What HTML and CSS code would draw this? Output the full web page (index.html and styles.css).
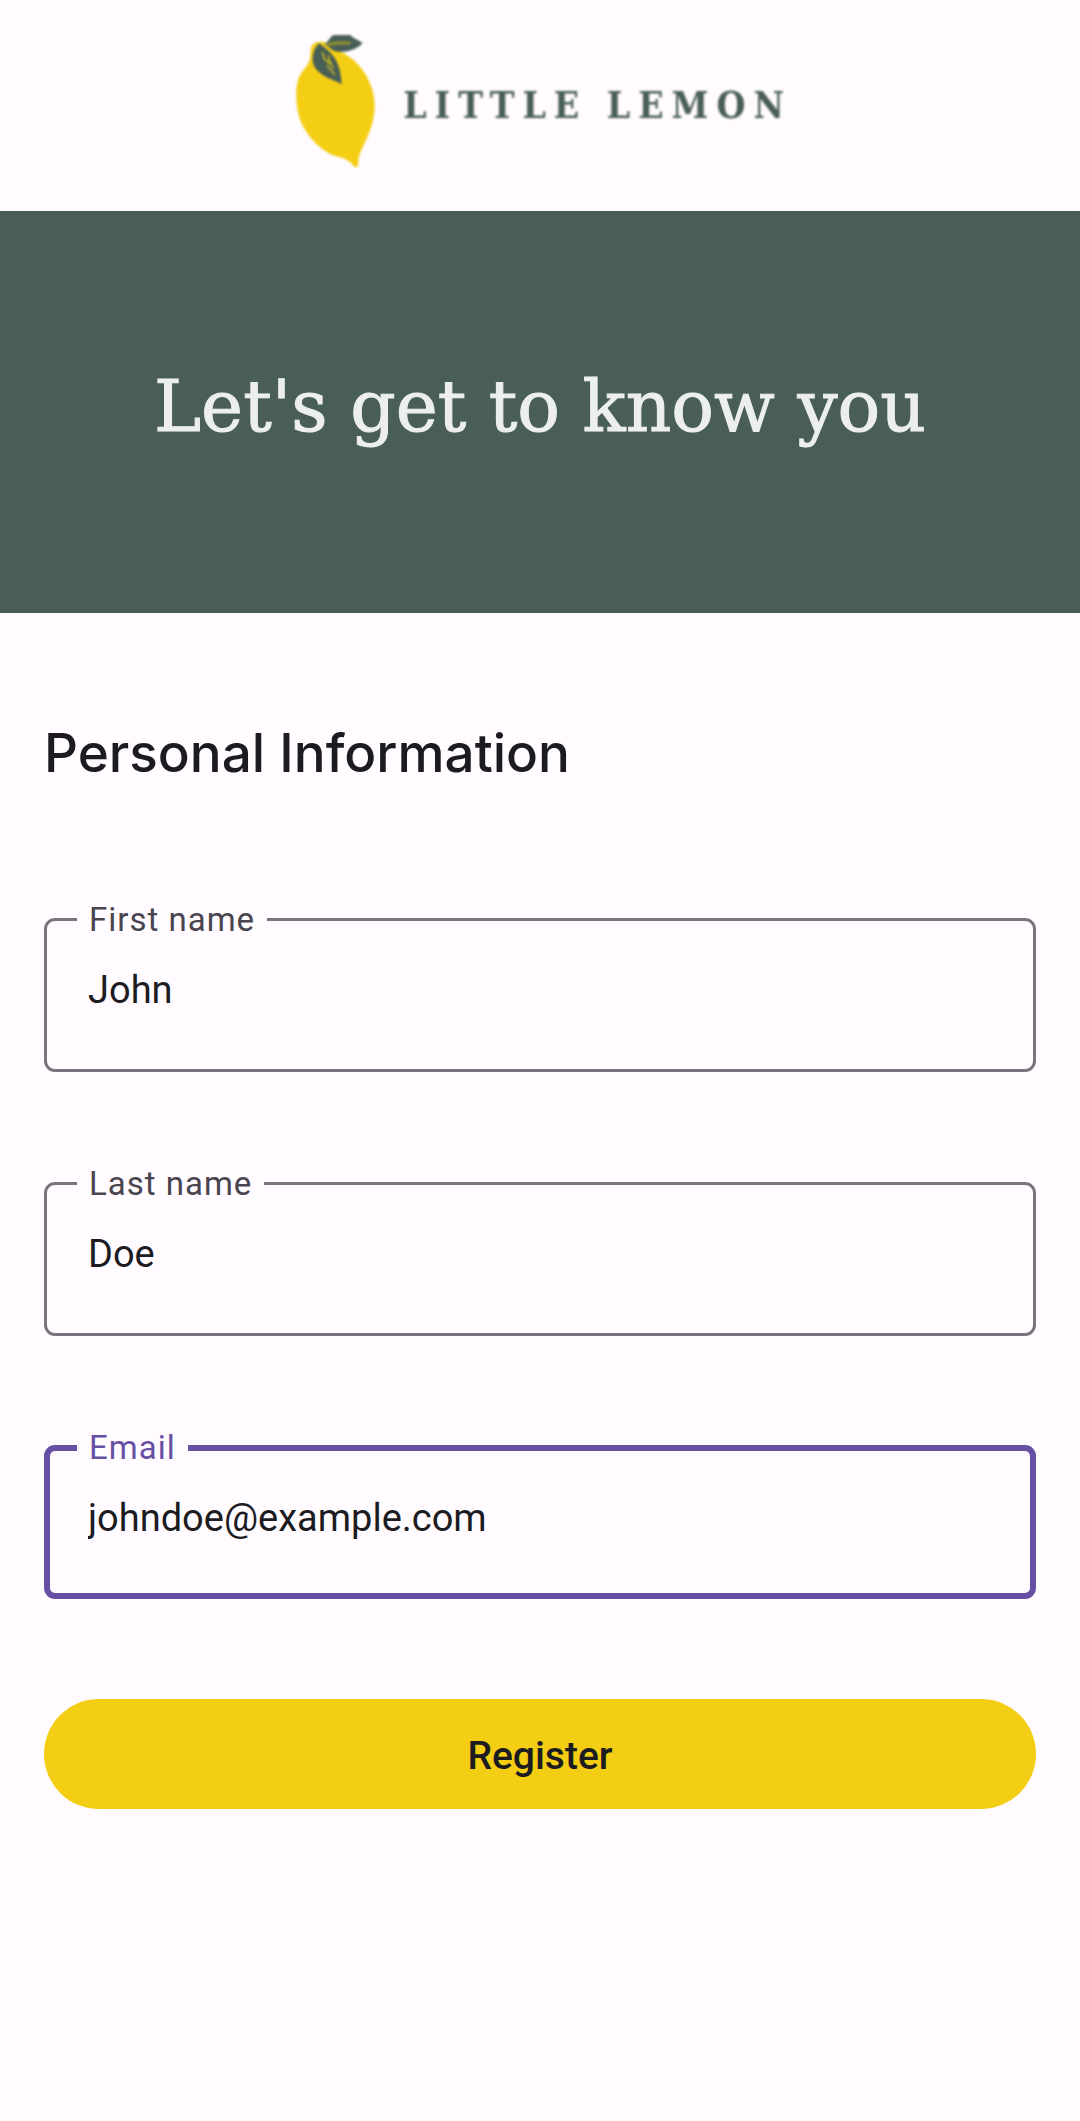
FILE: index.html
```html
<!DOCTYPE html>
<html lang="en">
<head>
<meta charset="utf-8">
<meta name="viewport" content="width=device-width, initial-scale=1">
<title>Little Lemon</title>
<link rel="stylesheet" href="styles.css">
</head>
<body>
<header class="brand">
  <svg class="brand-mark" viewBox="54 45 237 396" aria-hidden="true">
    <path fill="#f4ce14" d="M98 90C98 70 118 60 146 68L186 95C245 118 292 190 290 262C288 325 258 370 244 405C240 418 243 430 238 441L229 441C220 425 202 415 180 410C140 402 90 355 70 308C53 270 50 205 62 175C70 152 92 140 96 115Z"/>
    <path fill="#495e57" d="M140 72C156 62 156 45 170 45L216 45C224 54 242 60 254 69C240 86 210 98 178 95C160 92 152 80 140 72Z"/>
    <path fill="none" stroke="#8a8f35" stroke-width="10" stroke-linecap="round" d="M152 74C172 66 198 70 214 69"/>
    <path fill="#495e57" d="M123 70C150 90 188 112 191 193C170 180 135 174 112 145C97 122 104 88 123 70Z"/>
    <path fill="none" stroke="#c2b51e" stroke-width="5" stroke-linecap="round" d="M134 98L139 117L154 130L152 108M148 137L169 163M156 124L166 144"/>
  </svg>
  <span class="brand-name">LITTLE LEMON</span>
</header>

<section class="hero">
  <h1 class="hero-title">Let's get to know you</h1>
</section>

<main class="content">
  <h2 class="section-title">Personal Information</h2>
  <form class="form">
    <fieldset class="field">
      <legend class="field-legend"><label for="first-name">First name</label></legend>
      <input class="field-input" id="first-name" type="text" value="John">
    </fieldset>
    <fieldset class="field">
      <legend class="field-legend"><label for="last-name">Last name</label></legend>
      <input class="field-input" id="last-name" type="text" value="Doe">
    </fieldset>
    <fieldset class="field field-active">
      <legend class="field-legend"><label for="email">Email</label></legend>
      <input class="field-input" id="email" type="email" value="johndoe@example.com">
    </fieldset>
    <button class="submit" type="submit">Register</button>
  </form>
</main>
</body>
</html>
```
FILE: styles.css
```css
* {
  box-sizing: border-box;
}

body {
  margin: 0;
  background: #fffbff;
  color: #1c1b1f;
  font-family: Roboto, "Liberation Sans", sans-serif;
}

.brand {
  display: flex;
  justify-content: center;
  align-items: center;
  gap: 28px;
  padding: 35px 0 44px;
}

.brand-mark {
  width: 79px;
  height: 132px;
  filter: blur(1px);
}

.brand-name {
  padding-top: 8px;
  margin-right: -8px;
  color: #495e57;
  font: bold 37px/44px "DejaVu Serif Condensed", "DejaVu Serif", serif;
  letter-spacing: 8px;
  filter: blur(1px);
}

.hero {
  display: flex;
  justify-content: center;
  padding: 146px 44px 156px;
  background: #495e57;
}

.hero-title {
  margin: 0;
  color: #edefee;
  font: normal 71px/100px "DejaVu Serif", serif;
  text-align: center;
  -webkit-text-stroke: 1px #edefee;
}

.content {
  padding: 110px 44px;
}

.section-title {
  margin: 0 0 115px;
  font: 500 53px/60px Inter, Roboto, sans-serif;
}

.form {
  display: flex;
  flex-direction: column;
  gap: 90px;
}

.field {
  min-width: 0;
  margin: 0;
  padding: 0 30px;
  border: 3px solid #79747e;
  border-radius: 11px;
}

.field-legend {
  padding: 0 12px;
  color: #49454f;
  font-size: 33px;
  line-height: 43px;
  letter-spacing: 1px;
}

.field-input {
  display: block;
  width: 100%;
  height: 128px;
  padding: 20px 11px 50px;
  border: 0;
  outline: 0;
  background: transparent;
  color: inherit;
  font: 38px/58px Roboto, "Liberation Sans", sans-serif;
}

.field-active {
  padding: 0 27px;
  border: 6px solid #6750a4;
}

.field-active .field-legend {
  color: #6750a4;
}

.field-active .field-input {
  height: 124px;
  padding-bottom: 46px;
}

.submit {
  height: 110px;
  margin-top: 10px;
  padding: 4px 24px 0;
  border: 0;
  border-radius: 55px;
  background: #f4ce14;
  color: #1c1b1f;
  font: 500 39px/56px Roboto, "Liberation Sans", sans-serif;
}
```
